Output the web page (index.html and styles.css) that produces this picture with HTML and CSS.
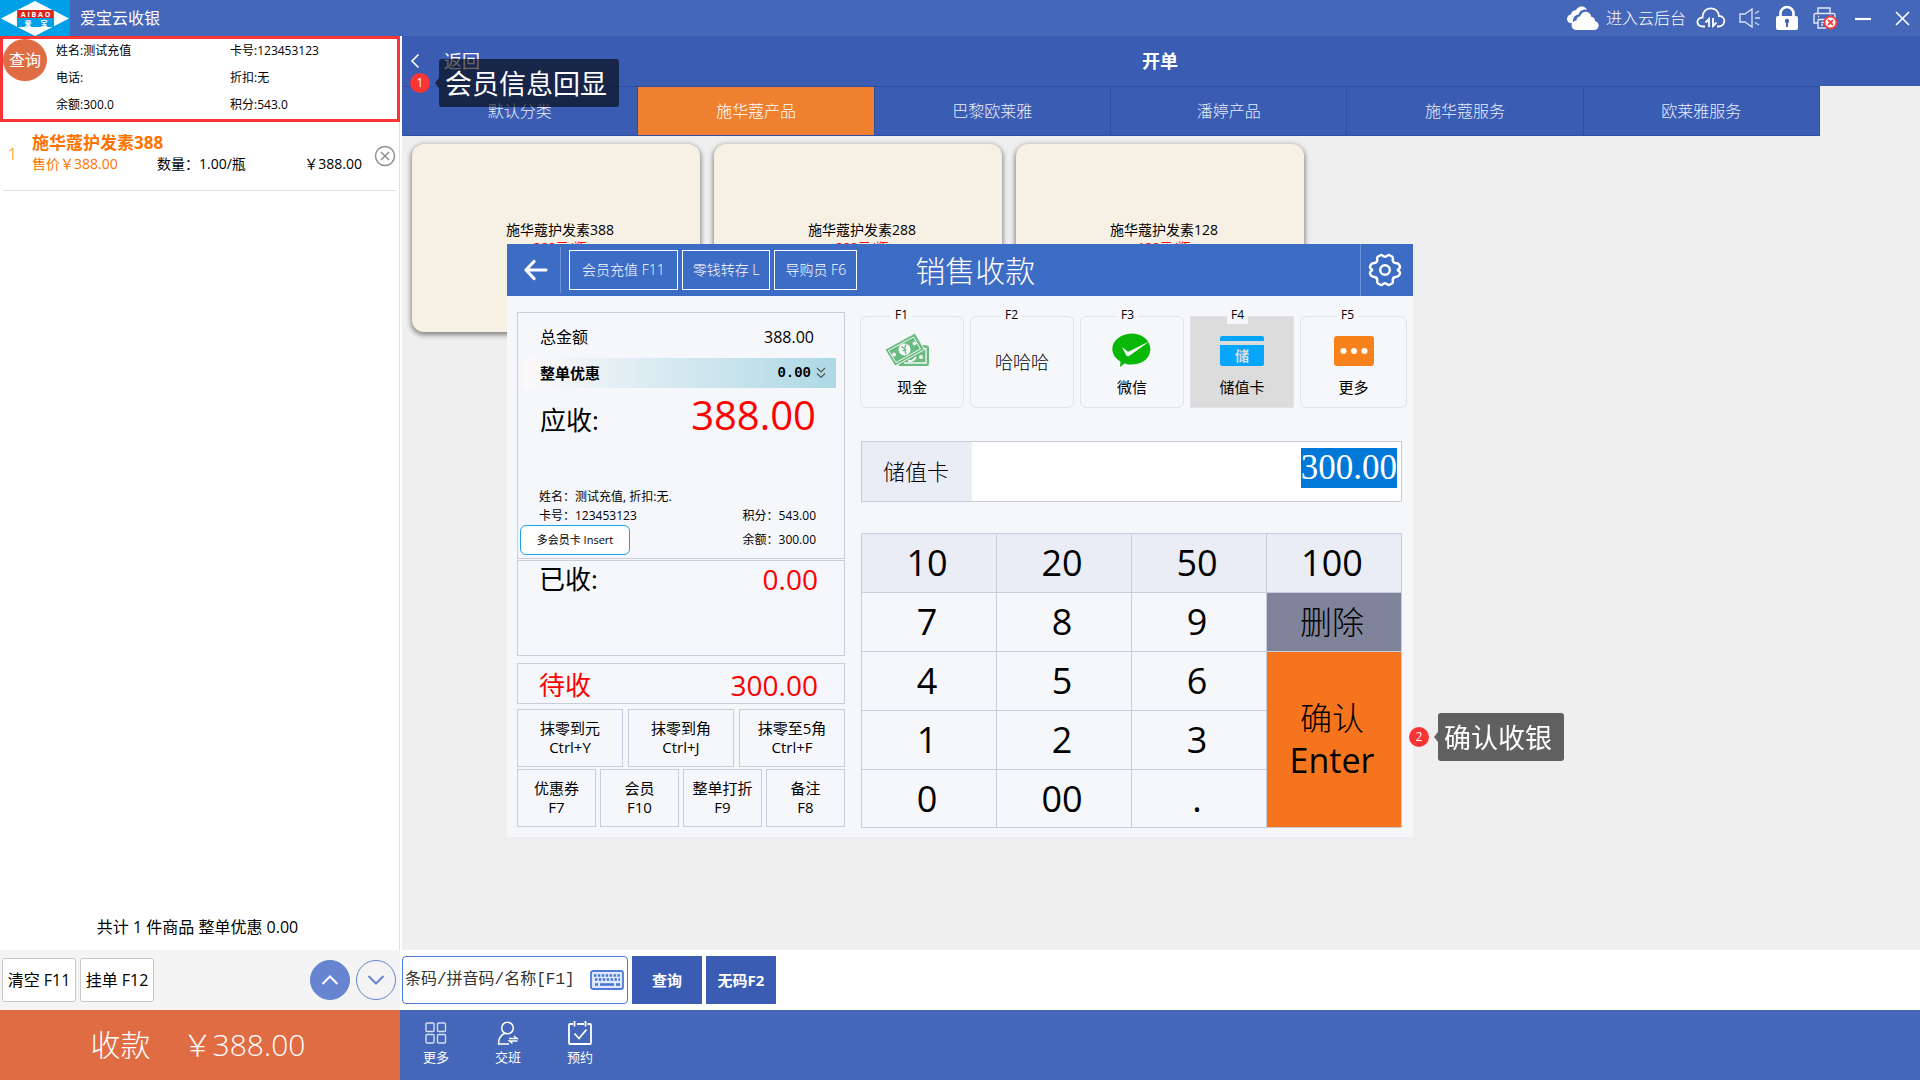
FILE: index.html
```html
<!DOCTYPE html>
<html lang="zh-CN">
<head>
<meta charset="utf-8">
<title>爱宝云收银</title>
<link rel="stylesheet" href="styles.css">
</head>
<body>
<header class="topbar">
  <svg class="logo" viewBox="0 0 70 36" aria-hidden="true">
    <rect width="70" height="36" fill="#00a0e9"/>
    <path d="M35 1 69 18.500 35 36 1 18.500Z" fill="#fff"/>
    <rect x="17" y="10" width="37" height="17" fill="#00a0e9"/>
    <rect x="18" y="10" width="35" height="8" fill="#d9261c"/>
    <text x="35.500" y="16.500" class="logo-latin">A I B A O</text>
    <text x="28" y="25.500" class="logo-han">爱</text>
    <text x="44" y="25.500" class="logo-han">宝</text>
  </svg>
  <h1 class="app-name">爱宝云收银</h1>
  <nav class="tools">
    <a class="cloud-link" href="#backend">
      <svg width="32" height="25" viewBox="0 0 32 25" fill="#fff" aria-hidden="true"><path d="M6 17C2 18 0 15.500 0 13s2-4.500 4-4.500C4.500 5 7 4 9 4.200 10.500 1 13 0 15.500.500 18 1 20 2.500 20 4c-4-1.500-7.500 1-8.500 4.500C7.500 9 5.500 12.500 6 17z"/><path d="M9 24c-6-.500-6-9 .500-9.500C9.500 12 11 10.500 13 10.500 14.500 4 23 4 24.500 11c2.500 0 3.500 2 3.500 4 5 1 5 8.500-.500 9z"/></svg>
      进入云后台</a>
    <button class="tool sync" aria-label="同步"><svg width="30" height="22" viewBox="0 0 30 22" fill="none" stroke="#fff" stroke-width="1.800"><path d="M9 19.500H6.500C-.500 19 0 10.500 6.500 10.500 6.500-1.500 22.500-1.500 23 9c7 0 7.500 10-.500 10.500H21M13 20v-8l-3.500 3.500M17 11v8l3.500-3.500"/></svg></button>
    <button class="tool sound" aria-label="声音"><svg width="22" height="20" viewBox="0 0 22 20" fill="none" stroke="#d7dff2" stroke-width="1.400"><path d="M1 6h5l7-5v18l-7-5H1zM16 10h5M16 5.500l4-2.500M16 14.500l4 2.500"/></svg></button>
    <button class="tool lock" aria-label="锁定"><svg width="24" height="26" viewBox="0 0 24 26" aria-hidden="true"><path d="M5.500 12V8.500a6.500 6.500 0 0 1 13 0V12" fill="none" stroke="#fff" stroke-width="2.600"/><rect x="1" y="11" width="22" height="14" rx="2" fill="#fff"/><circle cx="12" cy="16" r="2.200" fill="#4467b9"/><path d="M11 16h2v6h-2z" fill="#4467b9"/></svg></button>
    <button class="tool printer" aria-label="打印机"><svg width="25" height="23" viewBox="0 0 25 23" fill="none" stroke="#e4e9f6" stroke-width="1.400"><path d="M5 7V1h12v6M5 16H1V8q0-1.500 1.500-1.500h18Q22 6.500 22 8v4M5 12.500v8.500h8M5 12.500h7M8 15.500h3M8 18h2M5 9.500h1M17 9.500h2"/><circle cx="17.500" cy="15.500" r="6" fill="#fff" stroke="#ee4147" stroke-width="2"/><path d="m15 13 5 5m0-5-5 5" stroke="#ee4147" stroke-width="1.800"/></svg></button>
    <button class="tool minimize" aria-label="最小化"><svg width="16" height="16" viewBox="0 0 16 16"><path d="M0 9h16" stroke="#fff" stroke-width="2.200"/></svg></button>
    <button class="tool close" aria-label="关闭"><svg width="15" height="15" viewBox="0 0 15 15"><path d="m1 1 13 13M14 1 1 14" stroke="#fff" stroke-width="1.600"/></svg></button>
  </nav>
</header>

<div class="workspace">
  <aside class="cart">
    <section class="member">
      <button class="member-query">查询</button>
      <div class="member-info">
        <span>姓名:测试充值</span><span>卡号:123453123</span>
        <span>电话:</span><span>折扣:无</span>
        <span>余额:300.0</span><span>积分:543.0</span>
      </div>
    </section>
    <ol class="cart-list">
      <li class="cart-item">
        <span class="item-no">1</span>
        <div class="item-body">
          <strong class="item-name">施华蔻护发素388</strong>
          <div class="item-line"><span class="item-price">售价￥388.00</span><span>数量：1.00/瓶</span><span class="item-sum">￥388.00</span></div>
        </div>
        <button class="item-remove" aria-label="删除商品"><svg width="22" height="22" viewBox="0 0 22 22" fill="none" stroke="#8f8f8f" stroke-width="1.500"><circle cx="11" cy="11" r="9.500"/><path d="m7 7 8 8m0-8-8 8"/></svg></button>
      </li>
    </ol>
    <p class="cart-summary">共计 1 件商品 整单优惠 0.00</p>
    <div class="cart-actions">
      <button class="plain">清空 F11</button>
      <button class="plain">挂单 F12</button>
      <button class="round up" aria-label="上移"><svg width="18" height="10" viewBox="0 0 18 10" fill="none" stroke="#fff" stroke-width="2"><path d="m1.500 9 7.500-7.500L16.500 9"/></svg></button>
      <button class="round down" aria-label="下移"><svg width="18" height="10" viewBox="0 0 18 10" fill="none" stroke="#6684d0" stroke-width="2"><path d="M1.500 1 9 8.500 16.500 1"/></svg></button>
    </div>
    <button class="checkout"><span>收款</span><span>￥388.00</span></button>
  </aside>

  <main class="main">
    <div class="titlebar">
      <button class="back"><svg width="10" height="16" viewBox="0 0 10 16" fill="none" stroke="#fff" stroke-width="1.600"><path d="M8.500 1.500 2 8l6.500 6.500"/></svg>返回</button>
      <h2 class="page-title">开单</h2>
      <div class="note note-member"><span class="note-no">1</span><span class="note-text">会员信息回显</span></div>
    </div>
    <nav class="categories">
      <button>默认分类</button>
      <button class="active">施华蔻产品</button>
      <button>巴黎欧莱雅</button>
      <button>潘婷产品</button>
      <button>施华蔻服务</button>
      <button>欧莱雅服务</button>
    </nav>
    <section class="products">
      <button class="product"><span>施华蔻护发素388</span><span class="product-price">388元/瓶</span></button>
      <button class="product"><span>施华蔻护发素288</span><span class="product-price">288元/瓶</span></button>
      <button class="product"><span>施华蔻护发素128</span><span class="product-price">128元/瓶</span></button>
    </section>
    <form class="search">
      <div class="search-box">
        <input type="text" aria-label="商品搜索" placeholder="条码/拼音码/名称[F1]">
        <svg width="34" height="20" viewBox="0 0 34 20" aria-hidden="true"><rect x="1" y="1" width="32" height="18" rx="2" fill="#dfe8fb" stroke="#5079d8" stroke-width="1.800"/><path d="M4 5.500h26M5 9.500h25" stroke="#4672d6" stroke-width="2.400" stroke-dasharray="2.400 1.500"/><path d="M5 14.500h3M10 14.500h14M26 14.500h4" stroke="#4672d6" stroke-width="2.400"/></svg>
      </div>
      <button type="button">查询</button>
      <button type="button">无码F2</button>
    </form>
    <footer class="bottom">
      <button><svg width="22" height="24" viewBox="0 0 22 24" fill="none" stroke="#d5ddf1" stroke-width="1.400"><rect x="1" y="2" width="8" height="8.500" rx="1"/><rect x="12.500" y="2" width="8" height="8.500" rx="1"/><rect x="1" y="13.500" width="8" height="8.500" rx="1"/><rect x="12.500" y="13.500" width="8" height="8.500" rx="1"/></svg>更多</button>
      <button><svg width="22" height="24" viewBox="0 0 22 24" fill="none" stroke="#fff" stroke-width="1.500"><circle cx="10.500" cy="7" r="5.800"/><path d="M7.500 12.500C3 14.500 1.500 18 1.500 23H12M12 17.500h8l-3-2.500M20.500 20h-8l3 2.500"/></svg>交班</button>
      <button><svg width="24" height="24" viewBox="0 0 24 24" fill="none" stroke="#fff" stroke-width="1.800"><path d="M5 3H2q-1 0-1 1v18q0 1 1 1h20q1 0 1-1V4q0-1-1-1h-2.500M9 3h7M6.500 0v5.500M17.500 0v5.500M6.500 12.500l4.500 5 7.500-9"/></svg>预约</button>
    </footer>
  </main>
</div>

<section class="dialog" role="dialog" aria-labelledby="pay-title">
  <header class="dialog-head">
    <button class="dialog-back" aria-label="返回"><svg width="24" height="22" viewBox="0 0 24 22" fill="none" stroke="#fff" stroke-width="3.200" stroke-linecap="round" stroke-linejoin="round"><path d="M22 11H3M10 2.500 2 11l8 8.500"/></svg></button>
    <button class="head-btn recharge">会员充值 F11</button>
    <button class="head-btn">零钱转存 L</button>
    <button class="head-btn">导购员 F6</button>
    <h2 class="dialog-title" id="pay-title">销售收款</h2>
    <button class="dialog-settings" aria-label="设置"><svg width="34" height="34" viewBox="0 0 34 34" fill="none" stroke="#fff" stroke-width="2.400" stroke-linejoin="round"><path d="M12 2.500q1.500-1 2.500 0 2.500 2.500 5 0 1-1 2.500 0l2 1q1.200.800.800 2.500-.500 3.500 2.700 4 2.500.200 3.500 1.500.800 1.300 1 2.500 0 1.200-1 1.800-2.500 1.200 0 2.400 1 .600 1 1.800-.200 1.200-1 2.500-1 1.300-3.500 1.500-3.200.500-2.700 4 .400 1.700-.800 2.500l-2 1q-1.500 1-2.500 0-2.500-2.500-5 0-1 1-2.500 0l-2-1q-1.200-.800-.800-2.500.500-3.500-2.700-4-2.500-.200-3.500-1.500-.800-1.300-1-2.500 0-1.200 1-1.800 2.500-1.200 0-2.400-1-.600-1-1.800.200-1.200 1-2.500 1-1.300 3.500-1.500 3.200-.500 2.700-4-.400-1.700.800-2.500z"/><circle cx="17" cy="17" r="4.800"/></svg></button>
  </header>
  <div class="dialog-body">
    <div class="bill">
      <section class="panel due">
        <div class="row"><span>总金额</span><span>388.00</span></div>
        <button class="discount"><span>整单优惠</span><span class="discount-sum">0.00</span><svg width="10" height="12" viewBox="0 0 10 12" fill="none" stroke="#555" stroke-width="1.200"><path d="m1 1 4 4 4-4M1 6.500l4 4 4-4"/></svg></button>
        <div class="row due-row"><span class="big-label">应收:</span><span class="due-sum">388.00</span></div>
        <div class="member-lines">
          <span>姓名：测试充值, 折扣:无.</span>
          <div class="split"><span>卡号：123453123</span><span>积分：543.00</span></div>
        </div>
        <div class="multi"><button class="multi-card">多会员卡 Insert</button><span>余额：300.00</span></div>
      </section>
      <section class="panel received"><span class="big-label">已收:</span><span class="mid-sum">0.00</span></section>
      <section class="panel pending"><span class="big-label">待收</span><span class="mid-sum">300.00</span></section>
      <div class="round-off">
        <button>抹零到元<br>Ctrl+Y</button><button>抹零到角<br>Ctrl+J</button><button>抹零至5角<br>Ctrl+F</button>
      </div>
      <div class="extras">
        <button>优惠券<br>F7</button><button>会员<br>F10</button><button>整单打折<br>F9</button><button>备注<br>F8</button>
      </div>
    </div>
    <div class="pay">
      <div class="methods">
        <button class="method"><span class="key">F1</span>
          <svg width="56" height="36" viewBox="0 0 56 36" aria-hidden="true"><path d="M32 12l11 1.500q2 0 2 2V32q0 2-2 2H14z" fill="#69bb7f"/><path d="M36 16l6 .500V31H20" fill="none" stroke="#f6f7fb" stroke-width="1.300"/><circle cx="37" cy="25" r="2" fill="#f6f7fb"/><path d="M24 29q5 1 8-4" stroke="#f6f7fb" stroke-width="2" fill="none"/><path d="M1 17.500 31 1l9.500 16.500L11 34z" fill="#69bb7f" stroke="#f6f7fb"/><path d="M4.500 18.500 29.500 5l7 12L12 30.500z" fill="none" stroke="#f6f7fb" stroke-width="1"/><circle cx="20.500" cy="17.500" r="6" fill="#f6f7fb"/><circle cx="10" cy="22.500" r="2" fill="#f6f7fb"/><circle cx="30.500" cy="11.500" r="2" fill="#f6f7fb"/><path d="m17.500 14.500 3 2.500 1.500-4.500M20.500 17l1.500 5M18.500 19l4-1.500" stroke="#69bb7f" stroke-width="1.300" fill="none"/></svg>
          现金</button>
        <button class="method text-only"><span class="key">F2</span>哈哈哈</button>
        <button class="method"><span class="key key-mid">F3</span>
          <svg width="40" height="36" viewBox="0 0 40 36" aria-hidden="true"><path d="M20 1.500c24 1 25 30 0 31-4 0-6-.500-7.500-1L8 35l.500-5.500C-7 20 1 2 20 1.500z" fill="#09b807"/><path d="m10 15 5 4q1 1 3 0L38 9 17 24q-2 1-3-1z" fill="#fff"/></svg>
          微信</button>
        <button class="method selected"><span class="key key-mid">F4</span>
          <svg width="44" height="36" viewBox="0 0 44 36" aria-hidden="true"><path d="M0 9V6q0-2 2-2h40q2 0 2 2v3zM0 13h44v19q0 2-2 2H2q-2 0-2-2z" fill="#06a7fb"/><text x="22" y="29" class="card-char">储</text></svg>
          储值卡</button>
        <button class="method"><span class="key key-mid">F5</span>
          <svg width="40" height="36" viewBox="0 0 40 36" aria-hidden="true"><rect y="4" width="40" height="30" rx="3" fill="#f7821b"/><g fill="#fff"><circle cx="9.500" cy="19" r="3"/><circle cx="20" cy="19" r="3"/><circle cx="30.500" cy="19" r="3"/></g></svg>
          更多</button>
      </div>
      <div class="amount">
        <label for="amount">储值卡</label>
        <input id="amount" type="text" value="300.00">
      </div>
      <div class="keypad">
        <button class="quick">10</button><button class="quick">20</button><button class="quick">50</button><button class="quick">100</button>
        <button>7</button><button>8</button><button>9</button><button class="delete">删除</button>
        <button>4</button><button>5</button><button>6</button><button class="confirm"><span class="confirm-label">确认</span><br>Enter</button>
        <button>1</button><button>2</button><button>3</button>
        <button>0</button><button>00</button><button>.</button>
      </div>
    </div>
  </div>
  <div class="note note-confirm"><span class="note-no">2</span><span class="note-text">确认收银</span></div>
</section>
<script src="app.js"></script>
</body>
</html>
```
FILE: styles.css
```css
* { box-sizing: border-box; }

body {
  margin: 0;
  min-height: 100vh;
  display: flex;
  flex-direction: column;
  background: #fff;
  color: #000;
  font: 16px/20px "Open Sans", "Noto Sans CJK SC", sans-serif;
}

h1, h2, p, ol { margin: 0; padding: 0; font-weight: 400; }
button {
  margin: 0;
  padding: 0;
  border: 0;
  background: none;
  color: inherit;
  font: inherit;
  cursor: pointer;
  white-space: nowrap;
}
input { font: inherit; }
svg { display: block; flex: none; }

/* Window bar */
.topbar {
  height: 36px;
  display: flex;
  align-items: center;
  background: #4467b9;
  color: #fff;
}
.logo { width: 70px; height: 36px; }
.logo-latin { fill: #fff; font: 700 7px "Open Sans", sans-serif; text-anchor: middle; }
.logo-han { fill: #fff; font: 700 7px "Noto Sans CJK SC", sans-serif; text-anchor: middle; }
.app-name { margin-left: 10px; font-size: 16px; }
.tools { margin-left: auto; padding-right: 10px; display: flex; align-items: center; }
.cloud-link { display: flex; align-items: center; gap: 7px; color: #fff; text-decoration: none; font-weight: 300; }
.sync { margin-left: 10px; }
.sound { margin-left: 13px; }
.lock { margin-left: 14px; }
.printer { margin-left: 14px; }
.minimize { margin-left: 17px; }
.close { margin-left: 24px; }

.workspace { flex: 1; display: flex; }

/* Cart */
.cart { width: 400px; flex: none; display: flex; flex-direction: column; }
.member { height: 86px; display: flex; align-items: flex-start; border: 3px solid #fb3435; }
.member-query {
  width: 44px;
  height: 42px;
  flex: none;
  border-radius: 50%;
  background: #e06c43;
  color: #fff;
}
.member-info {
  flex: 1;
  padding: 2px 0 0 9px;
  display: grid;
  grid-template-columns: 174px 1fr;
  grid-auto-rows: 27px;
  font-size: 12px;
}
.cart-list { flex: 1; padding: 0 3px; border-right: 1px solid #e0e0e0; list-style: none; }
.cart-item { height: 69px; display: flex; align-items: center; border-bottom: 1px solid #dfdfdf; }
.item-no { width: 29px; padding: 0 0 4px 5px; color: #fe7300; font-weight: 300; }
.item-body { flex: 1; padding-bottom: 6px; }
.item-name { color: #fe7300; font-size: 17px; line-height: 22px; }
.item-line { display: grid; grid-template-columns: 125px 1fr auto; font-size: 14px; }
.item-price { color: #fe7300; }
.item-remove { margin-left: 12px; }
.cart-summary { height: 46px; padding: 13px 4px 0 0; border-right: 1px solid #e0e0e0; text-align: center; }
.cart-actions { height: 60px; padding: 0 4px 0 2px; display: flex; align-items: center; gap: 4px; background: #f4f4f4; }
.plain { width: 74px; height: 44px; border: 1px solid #c8c8c8; border-radius: 3px; background: #fff; }
.round { width: 40px; height: 40px; display: grid; place-items: center; border: 1px solid #6684d0; border-radius: 50%; }
.up { margin-left: auto; background: #6684d0; }
.down { margin-left: 2px; }
.checkout {
  height: 70px;
  padding-right: 4px;
  display: flex;
  align-items: center;
  justify-content: center;
  gap: 32px;
  background: #e06c43;
  color: #fff;
  font-size: 30px;
  font-weight: 300;
}

/* Main area */
.main { flex: 1; min-width: 0; display: flex; flex-direction: column; }
.titlebar {
  position: relative;
  height: 50px;
  margin-left: 2px;
  display: flex;
  align-items: center;
  background: #3a5cb3;
  color: #fff;
}
.back { display: flex; align-items: center; gap: 24px; padding-left: 8px; font-size: 18px; }
.page-title { flex: 1; padding-right: 80px; text-align: center; font-size: 18px; font-weight: 700; }
.categories { height: 50px; margin-left: 2px; padding-right: 100px; display: flex; background: #efefef; }
.categories button {
  flex: 1;
  border: solid #2f4fa5;
  border-width: 1px 1px 1px 0;
  background: #3a5cb3;
  color: #e9eefa;
  font-weight: 300;
}
.categories .active { background: #ef8030; color: #fff; }
.products {
  flex: 1;
  margin-left: 2px;
  padding: 8px 10px;
  display: flex;
  align-items: flex-start;
  gap: 14px;
  background: #efefef;
}
.product {
  width: 288px;
  height: 188px;
  padding: 76px 0 0 8px;
  display: flex;
  flex-direction: column;
  align-items: center;
  justify-content: flex-start;
  border-radius: 12px;
  background: #f7f0e5;
  box-shadow: 0 2px 5px 1px rgba(0, 0, 0, .45);
  font-size: 14px;
}
.product-price { color: #f00; font-size: 13px; line-height: 14px; }
.search { height: 60px; padding-left: 2px; display: flex; align-items: center; gap: 4px; }
.search-box {
  width: 226px;
  height: 48px;
  padding: 0 3px 0 2px;
  display: flex;
  align-items: center;
  border: 1px solid #4a77dc;
  border-radius: 4px;
}
.search-box input {
  flex: 1;
  min-width: 0;
  padding: 0;
  border: 0;
  outline: 0;
  background: none;
  font-family: "Liberation Mono", "Noto Sans CJK SC", monospace;
}
.search-box input::placeholder { color: #333; opacity: 1; }
.search button { width: 70px; height: 48px; background: #3a5cb3; color: #fff; font-size: 15px; font-weight: 700; }
.bottom { height: 70px; padding-left: 4px; display: flex; background: #4467b9; color: #fff; font-size: 13px; }
.bottom button { width: 64px; margin-right: 8px; display: flex; flex-direction: column; align-items: center; padding-top: 11px; gap: 2px; }

/* Callouts */
.note { position: absolute; z-index: 2; display: flex; align-items: center; color: #fff; }
.note-no {
  width: 20px;
  height: 20px;
  border-radius: 50%;
  background: #fb3435;
  text-align: center;
  font-size: 12px;
}
.note-text {
  height: 48px;
  margin-left: 9px;
  padding: 0 12px 0 6px;
  border-radius: 3px;
  background: rgba(0, 0, 0, .6);
  font-size: 27px;
  line-height: 50px;
  white-space: nowrap;
}
.note-text::before {
  content: "";
  position: absolute;
  left: 25px;
  top: 19px;
  border: solid transparent;
  border-width: 5px 4px 5px 0;
  border-right-color: rgba(0, 0, 0, .6);
}
.note-member { left: 8px; top: 23px; }
.note-confirm { left: 902px; top: 469px; }

/* Payment dialog */
.dialog {
  position: fixed;
  inset: 0;
  z-index: 1;
  width: 906px;
  height: fit-content;
  margin: auto;
  background: #f6f7fb;
}
.dialog-head { height: 52px; display: flex; align-items: center; gap: 4px; background: #3d6cc5; color: #fff; }
.dialog-back { width: 54px; height: 46px; padding-left: 4px; display: grid; place-items: center; border-right: 1px solid #6d92d8; }
.head-btn { height: 40px; padding: 0 10px; border: 1px solid #fff; font-size: 14px; font-weight: 300; }
.recharge { margin-left: 4px; padding: 0 12px; }
.dialog-title { flex: 1; padding: 2px 0 0 54px; font-size: 30px; font-weight: 300; line-height: 40px; }
.dialog-settings { width: 53px; height: 52px; padding-right: 4px; display: grid; place-items: center; border-left: 1px solid #6d92d8; }
.dialog-body { padding: 16px 6px 9px 10px; display: grid; grid-template-columns: 328px minmax(0, 1fr); gap: 15px; }

.bill { display: flex; flex-direction: column; }
.panel { border: 1px solid #c9cdda; }
.due { height: 247px; padding: 13px 0 3px; display: flex; flex-direction: column; }
.row { padding: 0 30px 0 22px; display: flex; justify-content: space-between; align-items: center; line-height: 22px; }
.discount {
  height: 30px;
  margin: 10px 8px 0 6px;
  padding: 0 10px 0 16px;
  display: flex;
  align-items: center;
  background: linear-gradient(90deg, #fcf9f9, #add8e6);
  font-size: 15px;
  font-weight: 700;
}
.discount-sum { margin: 0 5px 0 auto; font: 700 14px/20px "Liberation Mono", monospace; }
.due-row { height: 56px; padding-right: 28px; align-items: baseline; }
.big-label { font-size: 26px; line-height: 36px; }
.due-sum { color: #f00; font-size: 40px; font-weight: 500; line-height: 54px; }
.member-lines { margin-top: auto; padding: 0 28px 0 21px; font-size: 12px; line-height: 19px; }
.split { display: flex; justify-content: space-between; }
.multi { padding: 0 28px 0 2px; display: flex; justify-content: space-between; align-items: center; font-size: 12px; }
.multi-card { width: 110px; height: 30px; border: 1px solid #1ba4e4; border-radius: 6px; background: #fff; font-size: 11px; }
.received, .pending { padding: 0 26px 0 21px; display: flex; justify-content: space-between; }
.received { height: 96px; margin-top: 1px; }
.pending { height: 41px; margin-top: 7px; padding-top: 4px; align-items: center; color: #f00; }
.mid-sum { color: #f00; font-size: 28px; font-weight: 500; line-height: 36px; }
.round-off, .extras { display: grid; font-size: 15px; line-height: 19px; }
.round-off { margin-top: 5px; grid-template-columns: repeat(3, 1fr); gap: 5px; }
.extras { margin-top: 2px; grid-template-columns: repeat(4, 1fr); gap: 4px; }
.round-off button, .extras button { height: 58px; border: 1px solid #c9cdda; }

.pay { display: flex; flex-direction: column; }
.methods { margin-top: 4px; display: grid; grid-template-columns: repeat(4, 104px) 1fr; gap: 6px; }
.method {
  position: relative;
  height: 92px;
  padding-top: 15px;
  display: flex;
  flex-direction: column;
  align-items: center;
  gap: 9px;
  border: 1px solid #e2e3e6;
  border-radius: 6px;
  font-size: 15px;
}
.text-only { padding: 0; justify-content: center; font-size: 18px; font-weight: 300; }
.selected { border-radius: 0; background: #dcdcdc; }
.key {
  position: absolute;
  top: -10px;
  left: 30px;
  width: 21px;
  height: 17px;
  background: #f6f7fb;
  font-size: 12px;
  font-weight: 400;
  line-height: 16px;
}
.key-mid { left: 36px; }
.card-char { fill: #dcdcdc; font: 700 14px "Noto Sans CJK SC", sans-serif; text-anchor: middle; }
.amount {
  height: 61px;
  margin: 33px 5px 0 1px;
  display: flex;
  border: 1px solid #c9cdda;
  background: #fff;
}
.amount label { width: 110px; padding-right: 2px; display: grid; place-items: center; background: #eaedf5; font-size: 22px; font-weight: 300; }
.amount input {
  flex: 1;
  min-width: 0;
  padding: 0 4px 6px;
  border: 0;
  outline: 0;
  background: none;
  text-align: right;
  font: 35px/33px "Liberation Serif", serif;
  caret-color: transparent;
}
.amount input::selection { background: #0078d7; color: #fff; }
.keypad {
  margin: 31px 5px 0 1px;
  display: grid;
  grid-template-columns: repeat(4, 1fr);
  grid-template-rows: repeat(4, 58px) 57px;
  gap: 1px;
  border: 1px solid #c9cdda;
  background: #c9cdda;
}
.keypad button { padding-right: 4px; background: #f6f7fb; font-size: 36px; line-height: 43px; }
.keypad .quick { background: #eaedf5; }
.keypad .delete { background: #80849a; font-size: 32px; font-weight: 300; }
.keypad .confirm { grid-row: span 3; background: #f7741e; font-size: 34px; }
.confirm-label { font-size: 32px; font-weight: 300; }
```
FILE: app.js
```js
const amount = document.getElementById('amount');
amount.focus();
amount.select();
```
